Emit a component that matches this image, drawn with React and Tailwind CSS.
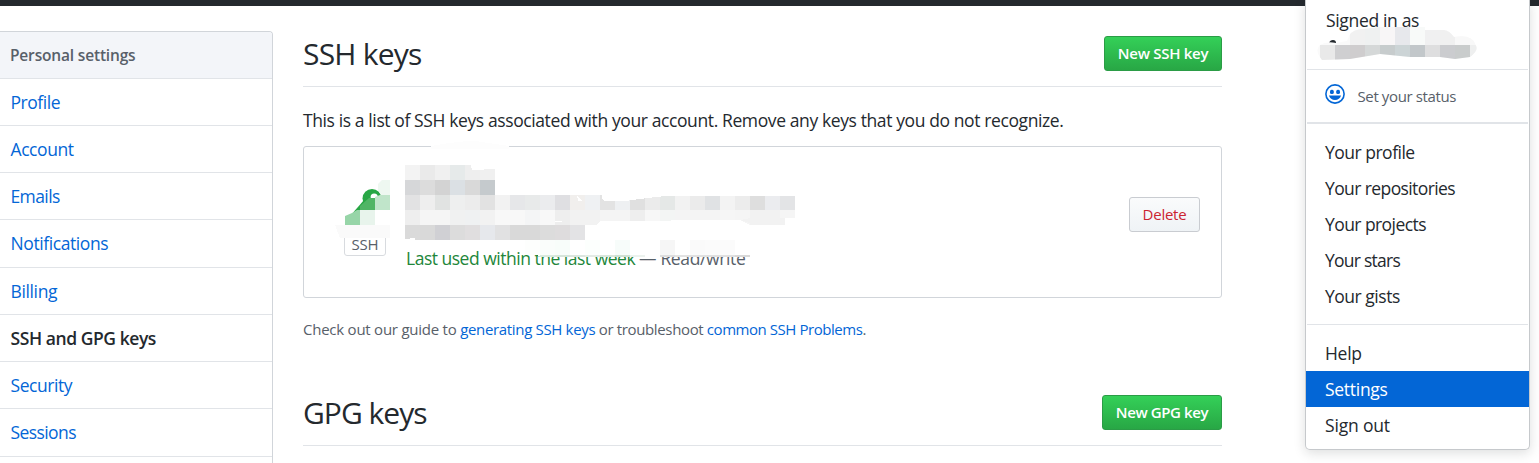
const navItems = [
  { label: "Profile", look: "h-[47px] text-[#0366d6] tracking-[-0.45px]" },
  { label: "Account", look: "h-[47px] text-[#0366d6] tracking-[-0.42px]" },
  { label: "Emails", look: "h-[47px] text-[#0366d6] tracking-[-0.6px]" },
  { label: "Notifications", look: "h-[48px] text-[#0366d6] tracking-[-0.41px]" },
  { label: "Billing", look: "h-[47px] text-[#0366d6] tracking-[-0.36px]" },
  { label: "SSH and GPG keys", look: "h-[47px] font-semibold text-[#24292e] tracking-[-0.43px]" },
  { label: "Security", look: "h-[47px] text-[#0366d6] tracking-[-0.45px]" },
  { label: "Sessions", look: "h-[48px] text-[#0366d6] tracking-[-0.58px]" },
];

const profileLinks = [
  { label: "Your profile", look: "tracking-[-0.5px]" },
  { label: "Your repositories", look: "tracking-[-0.6px]" },
  { label: "Your projects", look: "tracking-[-0.57px]" },
  { label: "Your stars", look: "tracking-[-0.75px]" },
  { label: "Your gists", look: "tracking-[-0.48px]" },
];

const accountLinks = [
  { label: "Help", look: "tracking-[-0.3px]" },
  { label: "Settings", look: "bg-[#0366d6] text-white tracking-[-0.28px]" },
  { label: "Sign out", look: "tracking-[-0.18px]" },
];

// Censored text blocks: rows of 15px tiles, [x, y, height, colours]
const keyTiles = [
  [405, 165, 15, "f3f3f3 eaeaea f0f0f0 e6eaea eeeeee f0f0f0"],
  [405, 180, 15, "d6d7d9 dcdcdc d3d3d3 dbe0e4 d9d9d9 c5cacd"],
  [405, 195, 15, "e2e2e3 eeeeee e1e3e2 eeefef ececec e2e2e2 f2f2f2 e6e7e9 e8eaea ebecee dfdfe2 f1efed eff1f3 e3e3e3 eef0f2 e0e0e0 ebebeb e5e8e7 f2f2f2 ebebeb e0e2e4 f3f3f3 ececec dedede ebecef e3e4e6"],
  [405, 210, 15, "eeeeee f5f5f5 f5f5f5 f0f1f1 eff1f2 f2f2f2 f8f8f8 f8f8f8 f4f5f6 f8f8f8 eeeeee f2f2f2 f2f2f2 f4f4f4 f4f4f4 eeeeee f7f7f7 f3f5f4 f4f4f4 f4f4f4 f4f4f4 f6f6f6 f5f5f5 f2f2f2 f2f2f2 f5f5f5"],
  [405, 225, 15, "dadada d9d9d9 d0d0d4 dcdcdc e0dedf e6e8ec e1e1e2 d9d9d9 d9d9d9 dcdcdc dedcdd e3e3e5"],
];
const lowerTiles = [
  [525, 240, 15, "fdfefd fafdfb f8fdfa ffffff fcfffd ffffff f7fcfa ffffff ffffff f6f6f6 ffffff fafafa fbfbfb fbfbfb ffffff"],
  [540, 255, 2, "d9e9dd d6e5da dbe6df e3ebe5 d9e6dc cfe0d3 ecf2ee ffffff dddddd e2e2e2 e0e0e0 e0e0e0 e0e0e0 d8d8d8"],
];
const nameTiles = [
  [1350, 25, 20, "f1f1f1 eff1f1 f8f6f7 e7e8ec f8faf9 f0f0f1 f0f0f0 f8f8f8 f8f8f8"],
  [1320, 45, 15, "e9e9e9 cfcfd1 cfcdce d5d8d8 c7cccd ccd4d6 c2c7ca dededf cbcccf c9cccc eeefef"],
];
const nameBlob =
  "M1320 45Q1326 41 1336 43L1347 41Q1350 30 1359 29.5L1380 27H1425V30H1444Q1450 31 1454 37Q1472 34 1475 44Q1480 50 1470 57L1455 59L1440 57H1410L1380 54L1350 59L1322 60Q1314 50 1320 45Z";

function Tiles({ rows }) {
  return rows.map(([x, y, h, colours]) =>
    colours.split(" ").map((c, i) => (
      <rect key={`${x}-${y}-${i}`} x={x + i * 15} y={y} width="15" height={h} fill={`#${c}`} />
    ))
  );
}

function KeyArtwork() {
  return (
    <svg
      className="pointer-events-none absolute -top-[7px] -left-px h-[152px] w-[919px]"
      viewBox="303 140 919 152"
      shapeRendering="crispEdges"
      aria-hidden="true"
    >
      <path d="M431 146Q470 139 482 142L509 146V149H431Z" fill="#fdfdfd" />
      <g shapeRendering="geometricPrecision">
        <path d="M351 215L364 200L368 202L356 214Z" fill="#28a745" />
        <circle cx="372" cy="198.5" r="9.5" fill="#28a745" />
        <circle cx="374.2" cy="197" r="3.6" fill="#fff" />
        <path d="M345 225V216L352 213L357 210H360V225Z" fill="#97d5a8" />
        <path d="M360 210V206L369 198H375V210Z" fill="#50b565" />
        <path d="M375 210V197L380 195H390V210Z" fill="#c0e5ca" />
        <path d="M390 180V195H381L378 190V184L382 180Z" fill="#eef8f1" />
      </g>
      <rect x="360" y="210" width="15" height="15" fill="#e8f4ec" />
      <rect x="375" y="210" width="15" height="15" fill="#fff" />
      <path d="M335 225H390V238H340Z" fill="#fafafa" />
      <Tiles rows={keyTiles} />
      <path d="M471 165H496V169H485L483 170H472Z" fill="#fff" />
      <path d="M577 195L582 201H578Z M602 195H796V196H665L640 199L625 201H604L602 198Z" fill="#fff" />
      <path d="M796 218H785V225H750L740 220H710L632 221L600 221L596 225H796Z" fill="#fff" />
      <path d="M750 225V223L740 220L750 218H785V225Z" fill="#f2f2f2" />
      <path d="M405 240V239L415 238V240Z M555 221H562V222H555Z" fill="#fff" />
      <path d="M518 240H750V257H560L530 255Z" fill="#fff" />
      <Tiles rows={lowerTiles} />
    </svg>
  );
}

function PageHeading({ children, action, look, buttonLook }) {
  return (
    <div className="flex h-[51px] items-start justify-between border-b border-[#e1e4e8]">
      <h2 className={`h-[35px] text-[30px] leading-[35px] ${look}`}>{children}</h2>
      <button
        className={`h-[35px] rounded-[3px] border border-[#2b9c46] bg-linear-to-b from-[#34d058] to-[#28a745] text-[15px] leading-[33px] font-semibold text-white ${buttonLook}`}
      >
        {action}
      </button>
    </div>
  );
}

function Sidebar() {
  return (
    <nav className="mt-[25px] h-[440px] w-[273px] shrink-0 rounded-tr-[4px] border-t border-r border-[#d1d5da]">
      <h3 className="flex h-[47px] items-center rounded-tr-[3px] border-b border-[#e1e4e8] bg-[#f3f5f9] pt-[2px] pl-[10px] text-[15.5px] font-semibold tracking-[-0.17px] text-[#586069]">
        Personal settings
      </h3>
      {navItems.map(({ label, look }) => (
        <a key={label} className={`flex items-center border-b border-[#e1e4e8] pl-[10.5px] ${look}`}>
          {label}
        </a>
      ))}
    </nav>
  );
}

function KeyCard() {
  return (
    <div className="relative mt-[14px] flex h-[152px] items-start rounded-[3px] border border-[#d1d5da]">
      <div className="mt-[84px] ml-[40px] flex h-[25px] w-[42px] items-end justify-center rounded-[3px] border border-[#d8dbdf] text-[15px] leading-[21px] tracking-[-0.2px] text-[#586069]">
        SSH
      </div>
      <p className="mt-[99px] ml-[20px] leading-6 whitespace-nowrap text-[#586069]">
        <span className="tracking-[-0.49px] text-[#22863a]">Last used within the last week</span>
        <span className="ml-[4px] tracking-[-0.37px]">— Read/write</span>
      </p>
      <button className="mt-[50px] mr-[21px] ml-auto h-[35px] w-[71px] rounded-[3px] border border-[#c9ccd1] bg-linear-to-b from-[#fafbfc] to-[#eff3f6] text-[15px] leading-[33px] font-medium tracking-[-0.25px] text-[#cb2431]">
        Delete
      </button>
      <KeyArtwork />
    </div>
  );
}

function UserMenu() {
  return (
    <div className="absolute top-0 left-[1305px] h-[450px] w-[225px] rounded-b-[5px] border border-t-0 border-[#c6c9cc] bg-white shadow-[0_3px_12px_rgba(27,31,35,0.15)]">
      <div className="mx-px h-[70px] border-b border-[#e1e4e8] pt-[8px] pl-[19px]">
        <p className="leading-6 tracking-[-0.33px]">Signed in as</p>
      </div>
      <div className="mx-px flex h-[54px] items-center border-b-2 border-[#e1e4e8] pl-[18px] text-[15px] tracking-[-0.38px] text-[#586069]">
        <svg className="mb-[5px] h-5 w-5" viewBox="0 0 20 20" fill="#0366d6" aria-hidden="true">
          <circle cx="10" cy="10" r="9.1" fill="none" stroke="#0366d6" strokeWidth="1.6" />
          <rect x="5" y="5.8" width="3.8" height="4.2" rx="1.6" />
          <rect x="11.2" y="5.8" width="3.8" height="4.2" rx="1.6" />
          <path d="M4 11.6H16C15.2 14.5 13 16.1 10 16.1S4.8 14.5 4 11.6Z" />
        </svg>
        <span className="ml-[12.5px]">Set your status</span>
      </div>
      <div className="mx-px h-[201px] border-b border-[#e1e4e8] pt-[11px]">
        {profileLinks.map(({ label, look }) => (
          <a key={label} className={`block h-9 pl-[18px] leading-[35px] ${look}`}>{label}</a>
        ))}
      </div>
      <div className="pt-[10px]">
        {accountLinks.map(({ label, look }) => (
          <a key={label} className={`block h-9 pl-[19px] leading-9 ${look}`}>{label}</a>
        ))}
      </div>
      <svg className="pointer-events-none absolute top-[24px] left-[9px] h-[40px] w-[170px]" viewBox="1315 24 170 40" aria-hidden="true">
        <clipPath id="name-blob">
          <path d={nameBlob} />
        </clipPath>
        <path d="M1329 43Q1330 40 1333 40Q1336 40 1336 43Z" fill="#24292e" />
        <g clipPath="url(#name-blob)" shapeRendering="crispEdges">
          <rect x="1315" y="24" width="170" height="40" fill="#fafafa" />
          <Tiles rows={nameTiles} />
        </g>
      </svg>
    </div>
  );
}

export default function App() {
  return (
    <div className="relative h-[463px] w-[1539px] overflow-hidden bg-white font-['Open_Sans','Noto_Sans',sans-serif] text-[17.5px] text-[#24292e]">
      <header className="h-[6px] bg-[#24292e]" />
      <div className="flex items-start">
        <Sidebar />
        <main className="mt-[30px] ml-[30px] w-[919px] shrink-0">
          <PageHeading action="New SSH key" look="tracking-[-0.78px]" buttonLook="w-[118px] tracking-[-0.28px]">
            SSH keys
          </PageHeading>
          <p className="mt-[21px] h-6 leading-6 tracking-[-0.392px] whitespace-nowrap">
            This is a list of SSH keys associated with your account. Remove any keys that you do not recognize.
          </p>
          <KeyCard />
          <p className="mt-[19px] mb-[54px] h-6 text-[15px] leading-6 whitespace-nowrap text-[#586069]">
            <span className="tracking-[-0.24px]">Check out our guide to </span>
            <a className="tracking-[-0.33px] text-[#0366d6]">generating SSH keys</a>
            <span className="tracking-[-0.36px]"> or troubleshoot </span>
            <a className="tracking-[-0.45px] text-[#0366d6]">common SSH Problems</a>.
          </p>
          <PageHeading action="New GPG key" look="tracking-[-0.98px]" buttonLook="w-[120px] tracking-[-0.39px]">
            GPG keys
          </PageHeading>
        </main>
      </div>
      <UserMenu />
    </div>
  );
}
